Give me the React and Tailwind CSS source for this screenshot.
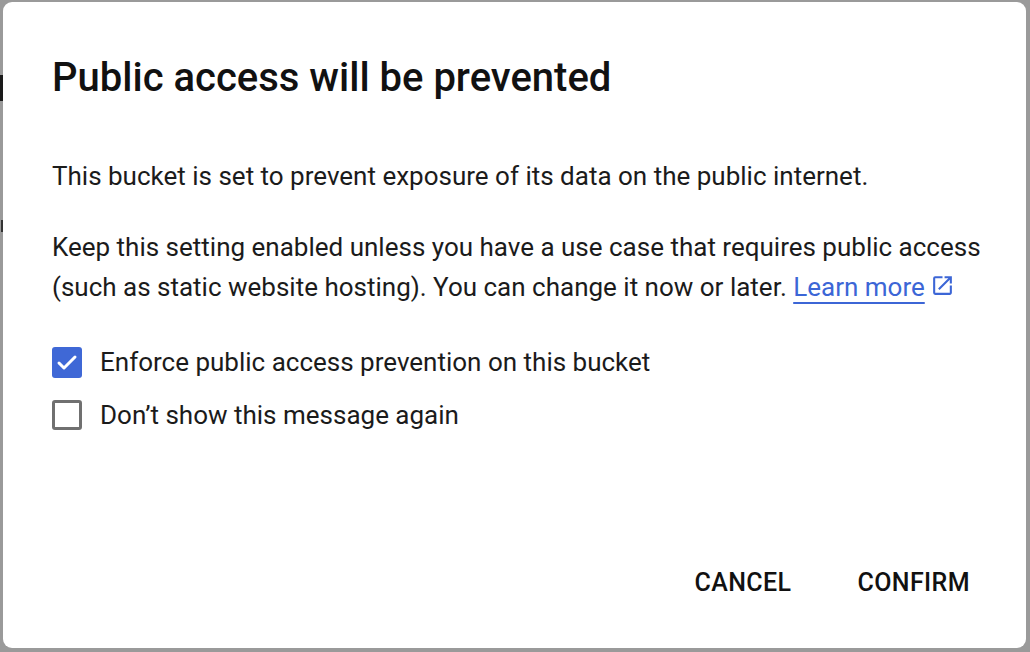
import { Check } from "lucide-react";

function OpenInNew() {
  return (
    <svg viewBox="0 0 24 24" width="25" height="25" className="inline-block ml-[5px] -mt-[7px]" fill="currentColor">
      <path d="M19 19H5V5h7V3H5a2 2 0 0 0-2 2v14a2 2 0 0 0 2 2h14c1.1 0 2-.9 2-2v-7h-2v7zM14 3v2h3.59l-9.83 9.83 1.41 1.41L19 6.41V10h2V3h-7z" />
    </svg>
  );
}

export default function App() {
  return (
    <div
      className="w-[1030px] h-[652px] bg-[#9a9a9a] relative overflow-hidden"
      style={{ fontFamily: "Roboto, 'Noto Sans', sans-serif" }}
    >
      {/* page behind the overlay */}
      <div className="absolute left-0 top-[75px] w-[3px] h-[26px] bg-[#1a1a1a]" />
      <div className="absolute left-0 top-[220px] w-[3px] h-[12px] border-r-2 border-[#333]" />

      <div className="absolute left-[3px] top-[2px] w-[1023px] h-[646px] bg-white rounded-[9px] flex flex-col px-[49px] pt-[52px] pb-[47px]">
        <h1 className="text-[40px] leading-[48px] font-medium text-[#111]">
          Public access will be prevented
        </h1>

        <p className="mt-[54px] text-[26px] leading-[40px] text-[#1b1b1b]">
          This bucket is set to prevent exposure of its data on the public internet.
        </p>
        <p className="mt-[31px] text-[26px] leading-[40px] text-[#1b1b1b] whitespace-nowrap">
          Keep this setting enabled unless you have a use case that requires public access
          <br />
          (such as static website hosting). You can change it now or later.{" "}
          <a className="text-[#3c66d6] underline underline-offset-[6px] decoration-[2px]">Learn more</a>
          <span className="text-[#3c66d6]">
            <OpenInNew />
          </span>
        </p>

        <div className="mt-[40px] flex flex-col gap-[22px]">
          <label className="flex items-center gap-[18px]">
            <span className="w-[30px] h-[31px] rounded-[3px] bg-[#3f68d6] flex items-center justify-center">
              <Check size={24} strokeWidth={3} className="text-white" />
            </span>
            <span className="text-[26px] leading-[31px] text-[#1b1b1b]">
              Enforce public access prevention on this bucket
            </span>
          </label>
          <label className="flex items-center gap-[18px]">
            <span className="w-[30px] h-[30px] rounded-[3px] border-[3px] border-[#707070]" />
            <span className="text-[26px] leading-[30px] text-[#1b1b1b]">
              Don’t show this message again
            </span>
          </label>
        </div>

        <div className="mt-auto flex justify-end items-center gap-[66px] pr-[7px]">
          <button className="text-[25px] font-medium tracking-[0.4px] text-[#111]">CANCEL</button>
          <button className="text-[25px] font-medium tracking-[0.4px] text-[#111]">CONFIRM</button>
        </div>
      </div>
    </div>
  );
}
